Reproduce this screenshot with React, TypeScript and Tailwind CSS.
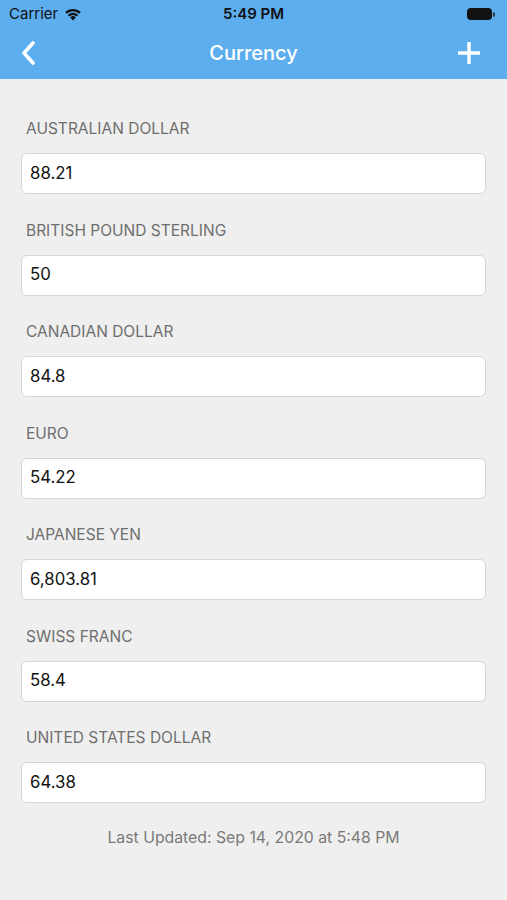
import React from "react";

const items: [string, string][] = [
  ["AUSTRALIAN DOLLAR", "88.21"],
  ["BRITISH POUND STERLING", "50"],
  ["CANADIAN DOLLAR", "84.8"],
  ["EURO", "54.22"],
  ["JAPANESE YEN", "6,803.81"],
  ["SWISS FRANC", "58.4"],
  ["UNITED STATES DOLLAR", "64.38"],
];

export default function App() {
  return (
    <div
      className="w-[507px] h-[900px] bg-[#efefef] flex flex-col"
      style={{ fontFamily: "Inter, 'Liberation Sans', Arial, sans-serif" }}
    >
      <div className="bg-[#5daeef] h-[79px] flex flex-col shrink-0">
        <div className="h-[28px] flex items-center px-[9px] relative">
          <div className="flex items-center gap-[6px] text-[15px] text-[#111]">
            <span>Carrier</span>
            <svg width="18" height="13" viewBox="0 0 18 13">
              <path d="M9 12.5 L6.2 9.4 A4 4 0 0 1 11.8 9.4 Z" fill="#111" />
              <path d="M3.8 6.9 A7.4 7.4 0 0 1 14.2 6.9 L12.7 8.5 A5.2 5.2 0 0 0 5.3 8.5 Z" fill="#111" />
              <path d="M1.2 4.1 A11.2 11.2 0 0 1 16.8 4.1 L15.3 5.7 A9 9 0 0 0 2.7 5.7 Z" fill="#111" />
            </svg>
          </div>
          <div className="absolute left-0 right-0 top-0 h-[28px] flex items-center justify-center text-[15px] font-semibold text-[#111]">
            5:49 PM
          </div>
          <div className="ml-auto flex items-center mr-[3px]">
            <div className="w-[25px] h-[12px] rounded-[4px] bg-[#111]" />
            <div className="w-[2px] h-[5px] bg-[#333] rounded-r-sm ml-[1px]" />
          </div>
        </div>
        <div className="flex-1 flex items-center px-[20px] relative">
          <svg width="17" height="24" viewBox="0 0 17 24" className="mt-[-2px]">
            <path d="M13 2 L4 12 L13 22" stroke="white" strokeWidth="3.6" fill="none" strokeLinecap="round" strokeLinejoin="round" />
          </svg>
          <div className="absolute left-0 right-0 top-0 bottom-0 flex items-center justify-center text-white text-[20px] font-medium pb-[2px]">
            Currency
          </div>
          <svg width="22" height="22" viewBox="0 0 22 22" className="ml-auto mr-[7px] mt-[-2px]">
            <path d="M11 1 V21 M1 11 H21" stroke="white" strokeWidth="3.4" strokeLinecap="round" />
          </svg>
        </div>
      </div>
      <div className="flex flex-col pt-[40px] px-[21px]">
        {items.map(([label, value], i) => (
          <div key={label} className={i === items.length - 1 ? "flex flex-col" : "flex flex-col mb-[26.5px]"}>
            <div className="h-[20px] leading-[20px] text-[15.5px] text-[#6e6e6e] px-[5px]">{label}</div>
            <div className="mt-[14px] h-[41px] bg-white border border-[#d6d6d6] rounded-[6px] flex items-center px-[8px] text-[16.8px] text-[#111]">
              {value}
            </div>
          </div>
        ))}
        <div className="mt-[25px] text-center text-[15.8px] text-[#7a7a7a] h-[20px] leading-[20px]">
          Last Updated: Sep 14, 2020 at 5:48 PM
        </div>
      </div>
    </div>
  );
}
